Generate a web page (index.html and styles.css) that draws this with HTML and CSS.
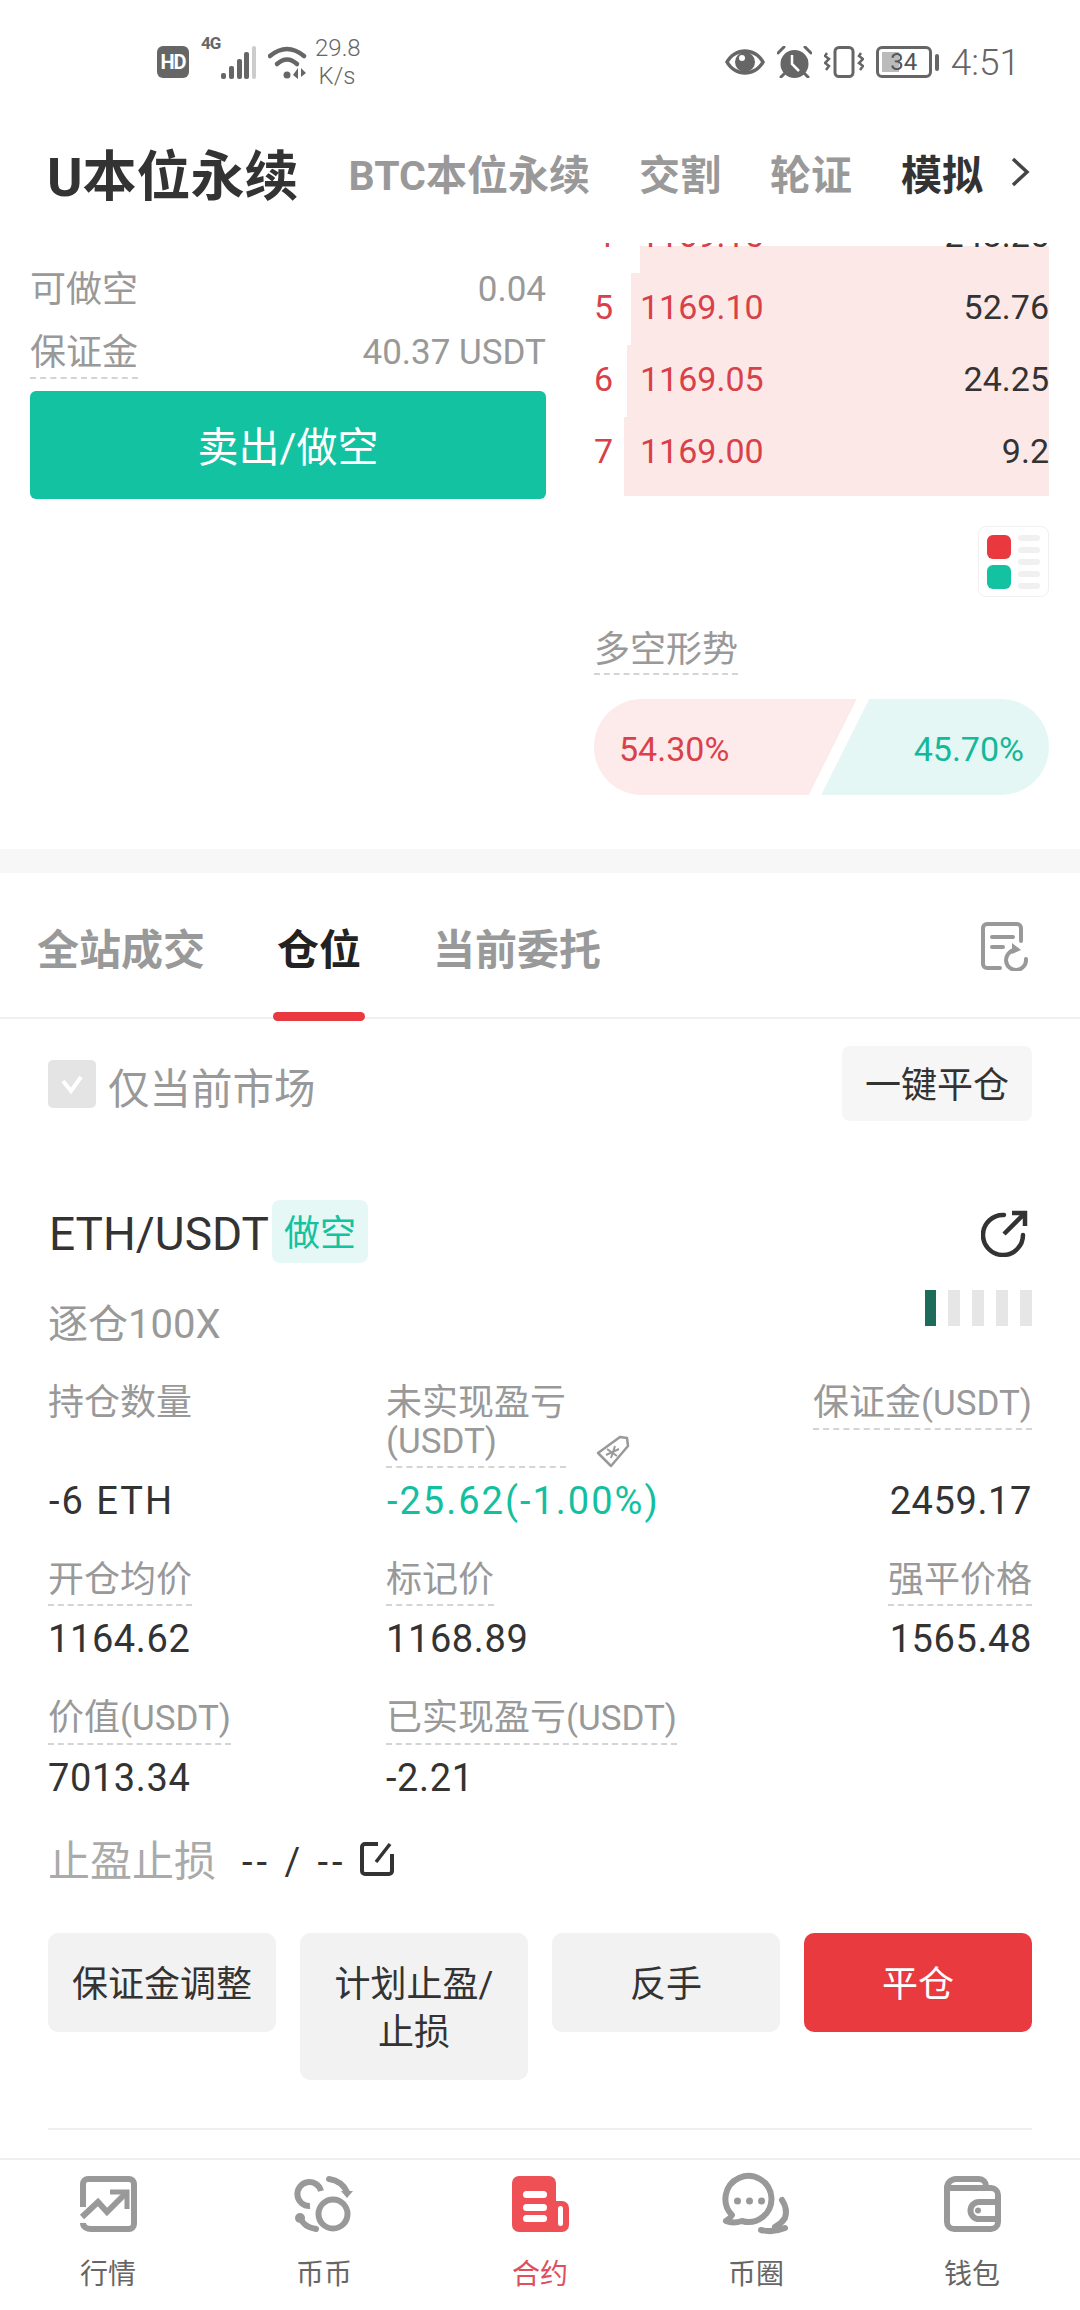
FILE: index.html
```html
<!DOCTYPE html>
<html lang="zh-CN">
<head>
  <meta charset="UTF-8" />
  <title>U本位永续</title>
  <link rel="stylesheet" href="styles.css">
</head>
<body>
  <div class="status">
    <div class="status-left">
      <div class="hd">HD</div>
      <div class="net">4G</div>
      <svg class="signal" width="36" height="33" viewBox="0 0 36 33">
        <rect x="0" y="27" width="5" height="6" rx="2" fill="#666"/>
        <rect x="8" y="20" width="5" height="13" rx="2" fill="#666"/>
        <rect x="16" y="13" width="5" height="20" rx="2" fill="#666"/>
        <rect x="23" y="6" width="5" height="27" rx="2" fill="#666"/>
        <rect x="31" y="0" width="4" height="33" rx="2" fill="#ccc"/>
      </svg>
      <svg class="wifi" width="39" height="33" viewBox="0 0 39 33">
        <path d="M2 10Q19 -4 36 10" fill="none" stroke="#666" stroke-width="4.5" stroke-linecap="round"/>
        <path d="M9 18Q19 9 29 18" fill="none" stroke="#666" stroke-width="4.5" stroke-linecap="round"/>
        <circle cx="19" cy="29" r="3.5" fill="#666"/>
        <path d="M30 22V33L25 29ZM33 22L38 27L33 31Z" fill="#666"/>
      </svg>
      <div class="speed">29.8<br>K/s</div>
    </div>
    <div class="status-right">
      <svg width="40" height="26" viewBox="0 0 40 26">
        <path d="M0 13C9 -4 31 -4 40 13C31 30 9 30 0 13Z" fill="#666"/>
        <path d="M4 13C11 1 29 1 36 13C29 25 11 25 4 13Z" fill="#fff"/>
        <circle cx="20" cy="13" r="10" fill="#666"/>
        <circle cx="17" cy="9" r="3" fill="#fff"/>
      </svg>
      <svg width="35" height="32" viewBox="0 0 35 32">
        <circle cx="17.5" cy="18" r="14" fill="#666"/>
        <path d="M15 9V18L22 25" fill="none" stroke="#fff" stroke-width="2.5"/>
        <path d="M1 7L7 1M28 1L34 7M7 28L4 31M28 28L31 31" stroke="#666" stroke-width="3" stroke-linecap="round"/>
      </svg>
      <svg width="40" height="32" viewBox="0 0 40 32">
        <rect x="11" y="1.5" width="18" height="29" rx="4" fill="none" stroke="#666" stroke-width="3"/>
        <path d="M3 7L1 10L5 13L1 17L5 20L2 24M37 7L35 10L39 13L35 17L39 20L36 24" fill="none" stroke="#666" stroke-width="2.5"/>
      </svg>
      <div class="battery">34</div>
      <div class="battery-nub"></div>
      <div class="clock">4:51</div>
    </div>
  </div>

  <div class="markets">
    <div class="market-main">U本位永续</div>
    <div class="market-tab">BTC本位永续</div>
    <div class="market-tab">交割</div>
    <div class="market-tab">轮证</div>
    <div class="market-tab on">模拟</div>
    <svg class="chevron" width="21" height="30" viewBox="0 0 21 30">
      <path d="M4 2L18 15L4 28" fill="none" stroke="#444" stroke-width="3.5"/>
    </svg>
  </div>

  <div class="trade">
    <div class="trade-left">
      <div class="info-row first">
        <span>可做空</span>
        <span class="num">0.04</span>
      </div>
      <div class="info-row">
        <span class="dash">保证金</span>
        <span class="num">40.37 USDT</span>
      </div>
      <div class="sell-btn">卖出/做空</div>
    </div>

    <div class="trade-right">
      <div class="book">
        <div class="book-row top">
          <div class="bar" style="width: 409px"></div>
          <span class="book-no">4</span><span class="book-price">1169.15</span><span class="book-qty">243.25</span>
        </div>
        <div class="book-row">
          <div class="bar" style="width: 418px"></div>
          <span class="book-no">5</span><span class="book-price">1169.10</span><span class="book-qty">52.76</span>
        </div>
        <div class="book-row">
          <div class="bar" style="width: 422px"></div>
          <span class="book-no">6</span><span class="book-price">1169.05</span><span class="book-qty">24.25</span>
        </div>
        <div class="book-row last">
          <div class="bar" style="width: 425px"></div>
          <span class="book-no">7</span><span class="book-price">1169.00</span><span class="book-qty">9.2</span>
        </div>
      </div>

      <div class="depth-btn">
        <div class="depth-dots"><i class="red"></i><i class="green"></i></div>
        <div class="depth-lines"><i></i><i></i><i></i><i></i><i></i></div>
      </div>

      <div class="trend-title"><span class="dash">多空形势</span></div>
      <div class="trend">
        <div class="trend-long">54.30%</div>
        <div class="trend-short">45.70%</div>
      </div>
    </div>
  </div>

  <div class="band"></div>

  <div class="tabs">
    <div class="tab">全站成交</div>
    <div class="tab on">仓位</div>
    <div class="tab">当前委托</div>
    <svg class="tabs-icon" width="48" height="50" viewBox="0 0 48 50">
      <path d="M41 20V7a4 4 0 0 0-4-4H7a4 4 0 0 0-4 4V43a4 4 0 0 0 4 4H20" fill="none" stroke="#999" stroke-width="4" stroke-linecap="round"/>
      <path d="M12 16H33M12 26H23" stroke="#999" stroke-width="4" stroke-linecap="round"/>
      <path d="M35 29A10 10 0 1 0 46 38" fill="none" stroke="#999" stroke-width="4" stroke-linecap="round"/>
      <path d="M32 22L41 29L32 33Z" fill="#999"/>
    </svg>
  </div>

  <div class="filter">
    <div class="check">
      <svg width="26" height="22" viewBox="0 0 26 22"><path d="M4 8L12 18L22 4" fill="none" stroke="#fff" stroke-width="4"/></svg>
    </div>
    <div class="filter-label">仅当前市场</div>
    <div class="close-all">一键平仓</div>
  </div>

  <div class="pos-head">
    <div class="pos-name">ETH/USDT</div>
    <div class="pos-tag">做空</div>
    <svg class="share" width="47" height="47" viewBox="0 0 47 47">
      <path d="M23 5A20 20 0 1 0 42 25" fill="none" stroke="#333" stroke-width="4.5" stroke-linecap="round"/>
      <path d="M23 24L43 4M31 3H44V16" fill="none" stroke="#333" stroke-width="4.5"/>
    </svg>
  </div>

  <div class="pos-sub">
    <div class="pos-lever">逐仓100X</div>
    <div class="risk">
      <i class="on"></i><i></i><i></i><i></i><i></i>
    </div>
  </div>

  <div class="stats">
    <div class="stat">
      <div class="stat-label">持仓数量</div>
      <div class="stat-val wide">-6 ETH</div>
    </div>
    <div class="stat">
      <div class="stat-label-wrap">
        <div class="stat-label dash">未实现盈亏<br><span class="unit">(USDT)</span></div>
        <svg class="tag-icon" width="34" height="33" viewBox="0 0 34 33">
          <path d="M2 18L24 2L31 3L32 11L15 31Z" fill="none" stroke="#999" stroke-width="2.5" stroke-linejoin="round"/>
          <path d="M11 14L21 21M19 11L15 23M10 20L23 14" stroke="#999" stroke-width="2"/>
        </svg>
      </div>
      <div class="stat-val green">-25.62(-1.00%)</div>
    </div>
    <div class="stat right">
      <div class="stat-label dash">保证金<span class="unit">(USDT)</span></div>
      <div class="stat-val">2459.17</div>
    </div>
    <div class="stat">
      <div class="stat-label dash">开仓均价</div>
      <div class="stat-val">1164.62</div>
    </div>
    <div class="stat">
      <div class="stat-label dash">标记价</div>
      <div class="stat-val">1168.89</div>
    </div>
    <div class="stat right">
      <div class="stat-label dash">强平价格</div>
      <div class="stat-val">1565.48</div>
    </div>
    <div class="stat">
      <div class="stat-label dash">价值<span class="unit">(USDT)</span></div>
      <div class="stat-val">7013.34</div>
    </div>
    <div class="stat">
      <div class="stat-label dash">已实现盈亏<span class="unit">(USDT)</span></div>
      <div class="stat-val">-2.21</div>
    </div>
  </div>

  <div class="stop">
    <div class="stop-label">止盈止损</div>
    <div class="stop-val">-- / --</div>
    <svg width="36" height="36" viewBox="0 0 36 36">
      <path d="M19 3H6a3 3 0 0 0-3 3V30a3 3 0 0 0 3 3H30a3 3 0 0 0 3-3V13" fill="none" stroke="#333" stroke-width="4"/>
      <path d="M17 21L31 3" stroke="#333" stroke-width="3.5"/>
    </svg>
  </div>

  <div class="actions">
    <div class="action">保证金调整</div>
    <div class="action">计划止盈/<br>止损</div>
    <div class="action">反手</div>
    <div class="action red">平仓</div>
  </div>

  <div class="divider"></div>

  <div class="nav">
    <div class="nav-item">
      <svg width="57" height="56" viewBox="0 0 57 56">
        <path d="M3 31V8a5 5 0 0 1 5-5H49a5 5 0 0 1 5 5V48a5 5 0 0 1-5 5H11c-4 0-8-2-8-6" fill="none" stroke="#999" stroke-width="6"/>
        <path d="M2 41L18 26L27 36L46 17" fill="none" stroke="#999" stroke-width="6"/>
        <path d="M30 16H47V33" fill="none" stroke="#999" stroke-width="5"/>
      </svg>
      <div class="nav-label">行情</div>
    </div>
    <div class="nav-item">
      <svg width="60" height="56" viewBox="0 0 60 56">
        <circle cx="39" cy="38" r="14.5" fill="none" stroke="#999" stroke-width="6"/>
        <path d="M27 15A12 12 0 1 0 16 30" fill="none" stroke="#999" stroke-width="6"/>
        <path d="M35 3Q48 5 53 16" fill="none" stroke="#999" stroke-width="6" stroke-linecap="round"/>
        <path d="M47 15L59 15L53 22Z" fill="#999"/>
        <path d="M7 43Q10 51 22 53" fill="none" stroke="#999" stroke-width="6" stroke-linecap="round"/>
        <circle cx="6" cy="42" r="5" fill="#999"/>
      </svg>
      <div class="nav-label">币币</div>
    </div>
    <div class="nav-item on">
      <svg width="57" height="56" viewBox="0 0 57 56">
        <path d="M7 0H37a7 7 0 0 1 7 7V25H50a7 7 0 0 1 7 7V49a7 7 0 0 1-7 7H7a7 7 0 0 1-7-7V7a7 7 0 0 1 7-7Z" fill="#ef5056"/>
        <rect x="11" y="15" width="24" height="7" rx="3.5" fill="#fff"/>
        <rect x="11" y="28" width="24" height="7" rx="3.5" fill="#fff"/>
        <rect x="11" y="39" width="24" height="7" rx="3.5" fill="#fff"/>
        <rect x="46" y="30" width="5" height="20" rx="2.5" fill="#fff"/>
      </svg>
      <div class="nav-label">合约</div>
    </div>
    <div class="nav-item">
      <svg class="chat" width="66" height="60" viewBox="0 0 66 60">
        <path d="M9 41A23 23 0 1 1 19 47Q10 50 3 47Q7 45 9 41Z" fill="none" stroke="#999" stroke-width="6" stroke-linejoin="round"/>
        <circle cx="14.500" cy="27" r="3.500" fill="#999"/>
        <circle cx="26.500" cy="27" r="3.500" fill="#999"/>
        <circle cx="38.500" cy="27" r="3.500" fill="#999"/>
        <path d="M59 26Q65 35 62 44Q58 50 52 53" fill="none" stroke="#999" stroke-width="6" stroke-linecap="round"/>
        <path d="M38 56Q50 59 62 54" fill="none" stroke="#999" stroke-width="6" stroke-linecap="round"/>
      </svg>
      <div class="nav-label">币圈</div>
    </div>
    <div class="nav-item">
      <svg width="57" height="56" viewBox="0 0 57 56">
        <path d="M42 12V10a7 7 0 0 0-7-7H12a9 9 0 0 0-9 9V46a7 7 0 0 0 7 7H47a7 7 0 0 0 7-7V19a7 7 0 0 0-7-7H3" fill="none" stroke="#999" stroke-width="6"/>
        <path d="M54 26H35a8 8 0 0 0 0 17H54" fill="none" stroke="#999" stroke-width="6"/>
        <circle cx="34" cy="34.500" r="3" fill="#999"/>
      </svg>
      <div class="nav-label">钱包</div>
    </div>
  </div>
</body>
</html>
```

FILE: styles.css
```css
html, body {
  margin: 0;
  padding: 0;
  background: #fff;
}
body {
  width: 1080px;
  height: 2310px;
  overflow: hidden;
  font-family: Roboto, "Noto Sans CJK SC", sans-serif;
  color: #333;
}
i {
  display: block;
}
.dash {
  border-bottom: 2px dashed #d4d4d4;
}

/* status bar */
.status {
  height: 120px;
  padding: 4px 60px 0 157px;
  box-sizing: border-box;
  display: flex;
  justify-content: space-between;
  align-items: center;
}
.status-left, .status-right {
  display: flex;
  align-items: center;
}
.hd {
  width: 32px;
  height: 32px;
  border-radius: 6px;
  background: #666;
  color: #fff;
  font-size: 20px;
  font-weight: 700;
  line-height: 32px;
  text-align: center;
  letter-spacing: -1px;
}
.net {
  align-self: flex-start;
  margin: 0 0 0 12px;
  padding-top: 2px;
  width: 20px;
  font-size: 17px;
  line-height: 14px;
  font-weight: 700;
  color: #666;
  letter-spacing: -1px;
}
.wifi {
  margin-left: 11px;
}
.speed {
  margin-left: 8px;
  width: 44px;
  font-size: 24px;
  line-height: 28px;
  color: #666;
  text-align: center;
  font-weight: 300;
}
.status-right svg {
  margin-right: 12px;
}
.battery {
  width: 56px;
  height: 32px;
  box-sizing: border-box;
  border: 3px solid #666;
  border-radius: 6px;
  background: linear-gradient(#bbb, #bbb) no-repeat 3px 3px / 17px 20px;
  font-size: 24px;
  line-height: 26px;
  color: #555;
  text-align: center;
}
.battery-nub {
  width: 4px;
  height: 17px;
  margin-left: 3px;
  background: #666;
  border-radius: 2px;
}
.clock {
  margin-left: 12px;
  font-size: 37px;
  color: #666;
  font-weight: 300;
}

/* market tabs */
.markets {
  height: 126px;
  padding: 0 0 22px 47px;
  box-sizing: border-box;
  display: flex;
  align-items: center;
}
.market-main {
  font-size: 54px;
  font-weight: 700;
  margin-right: 50px;
  white-space: nowrap;
  color: #333;
}
.market-tab {
  font-size: 41px;
  font-weight: 700;
  color: #999;
  margin-right: 49px;
  white-space: nowrap;
}
.market-tab.on {
  color: #333;
  margin-right: 26px;
}

/* trade area */
.trade {
  height: 603px;
  display: flex;
}
.trade-left {
  width: 516px;
  margin-left: 30px;
}
.trade-right {
  width: 455px;
  margin-left: 48px;
  margin-top: -3px;
}
.info-row {
  margin-top: 15px;
  display: flex;
  justify-content: space-between;
  align-items: flex-start;
  font-size: 36px;
  line-height: 48px;
  color: #999;
}
.info-row.first {
  margin-top: 20px;
}
.info-row .num {
  font-size: 35px;
}
.sell-btn {
  margin-top: 12px;
  height: 108px;
  border-radius: 6px;
  background: #12c2a0;
  color: #fff;
  font-size: 41px;
  line-height: 114px;
  text-align: center;
}
.book {
  height: 253px;
  overflow: hidden;
}
.book-row {
  position: relative;
  height: 72px;
  display: flex;
  align-items: flex-start;
  font-size: 34px;
  line-height: 68px;
}
.book-row.top {
  margin-top: -42px;
}
.book-row.last {
  height: 79px;
}
.bar {
  position: absolute;
  right: 0;
  top: 0;
  bottom: 0;
  background: #fde8e8;
}
.book-row.top .bar {
  top: 45px;
}
.book-no, .book-price, .book-qty {
  position: relative;
}
.book-no {
  width: 46px;
  color: #d8414a;
}
.book-price {
  color: #d8414a;
}
.book-qty {
  margin-left: auto;
  color: #333;
}
.depth-btn {
  width: 71px;
  height: 71px;
  margin: 30px 0 0 auto;
  box-sizing: border-box;
  border: 1px solid #f0f0f0;
  border-radius: 8px;
  padding: 8px;
  display: flex;
  gap: 7px;
}
.depth-dots i {
  width: 24px;
  height: 24px;
  border-radius: 6px;
  margin-bottom: 6px;
}
.depth-dots .red {
  background: #e9393f;
}
.depth-dots .green {
  background: #12c2a0;
}
.depth-lines {
  flex: 1;
}
.depth-lines i {
  height: 6px;
  border-radius: 3px;
  background: #f0f0f0;
  margin-bottom: 6px;
}
.trend-title {
  margin-top: 31px;
  font-size: 36px;
  line-height: 45px;
  color: #999;
}
.trend-title .dash {
  display: inline-block;
}
.trend {
  margin-top: 24px;
  height: 96px;
  display: flex;
  font-size: 34px;
  line-height: 100px;
}
.trend-long {
  width: 263px;
  padding-left: 25px;
  box-sizing: border-box;
  border-radius: 48px 0 0 48px;
  background: linear-gradient(to top left, transparent 50%, #fdeaea 50.5%) no-repeat right top / 48px 96px,
    linear-gradient(#fdeaea, #fdeaea) no-repeat left top / 215px 96px;
  color: #d8414a;
}
.trend-short {
  width: 228px;
  margin-left: -36px;
  padding-right: 25px;
  box-sizing: border-box;
  border-radius: 0 48px 48px 0;
  background: linear-gradient(to bottom right, transparent 50%, #e4f7f4 50.5%) no-repeat left top / 48px 96px,
    linear-gradient(#e4f7f4, #e4f7f4) no-repeat right top / 180px 96px;
  color: #14b89a;
  text-align: right;
}
.band {
  height: 24px;
  background: #f7f7f7;
}

/* list tabs */
.tabs {
  height: 144px;
  padding-left: 37px;
  display: flex;
  align-items: center;
  gap: 72px;
  border-bottom: 2px solid #f0f0f0;
}
.tab {
  position: relative;
  font-size: 42px;
  line-height: 56px;
  margin-top: 11px;
  font-weight: 700;
  color: #999;
}
.tab.on {
  color: #222;
}
.tab.on::after {
  content: "";
  position: absolute;
  left: -4px;
  right: -4px;
  bottom: -42px;
  height: 9px;
  border-radius: 5px;
  background: #e9393f;
}
.tabs-icon {
  margin-left: auto;
  margin-right: 52px;
  margin-top: 2px;
}
.filter {
  margin-top: 27px;
  padding: 0 48px;
  height: 75px;
  display: flex;
  align-items: center;
}
.check {
  width: 48px;
  height: 48px;
  border-radius: 5px;
  background: #e4e4e4;
  display: flex;
  align-items: center;
  justify-content: center;
}
.filter-label {
  margin-left: 12px;
  margin-top: 5px;
  font-size: 41.5px;
  color: #999;
}
.close-all {
  margin-left: auto;
  width: 190px;
  height: 75px;
  border-radius: 8px;
  background: #f6f6f6;
  font-size: 36px;
  line-height: 80px;
  text-align: center;
  color: #333;
}

/* position card */
.pos-head {
  margin-top: 79px;
  padding: 0 48px 0 49px;
  height: 63px;
  display: flex;
  align-items: center;
}
.pos-name {
  font-size: 46px;
  line-height: 63px;
  margin-top: 6px;
  color: #333;
}
.pos-tag {
  margin-left: 3px;
  width: 96px;
  height: 63px;
  border-radius: 8px;
  background: #e6f8f5;
  color: #14c2a0;
  font-size: 36px;
  line-height: 68px;
  text-align: center;
}
.share {
  margin-left: auto;
  margin-right: 4px;
  margin-top: 4px;
}
.pos-sub {
  margin-top: 27px;
  padding: 0 48px;
  height: 66px;
  display: flex;
  justify-content: space-between;
  align-items: flex-start;
}
.pos-lever {
  font-size: 40px;
  line-height: 70px;
  color: #999;
}
.risk {
  display: flex;
  gap: 12px;
}
.risk i {
  width: 12px;
  height: 36px;
  background: #e6e6e6;
}
.risk i.on {
  width: 11px;
  background: #1d6b5a;
}
.stats {
  margin-top: 28px;
  padding: 0 48px;
  display: grid;
  grid-template-columns: 338px 1fr 1fr;
  row-gap: 37px;
}
.stat {
  display: flex;
  flex-direction: column;
  justify-content: space-between;
  align-items: flex-start;
}
.stat.right {
  align-items: flex-end;
}
.stat-label {
  font-size: 36px;
  line-height: 38px;
  padding-bottom: 5px;
  color: #999;
  white-space: nowrap;
}
.stat-label-wrap {
  display: flex;
  align-items: flex-end;
  gap: 30px;
}
.unit {
  font-size: 35px;
}
.stat-val {
  margin-top: 10px;
  font-size: 38px;
  line-height: 46px;
  letter-spacing: 0.6px;
  color: #333;
}
.stat-val.wide {
  margin-left: 1px;
  letter-spacing: 2px;
}
.stat-val.green {
  margin-left: 1px;
  letter-spacing: 2px;
  color: #14bfa0;
}
.stop {
  margin-top: 36px;
  padding-left: 48px;
  height: 50px;
  display: flex;
  align-items: center;
}
.stop-label {
  font-size: 42px;
  line-height: 50px;
  color: #aaa;
}
.stop-val {
  margin-left: 26px;
  width: 117px;
  font-size: 38px;
  letter-spacing: 4px;
  white-space: nowrap;
  color: #333;
}
.stop svg {
  margin-top: -7px;
}
.actions {
  margin-top: 46px;
  padding: 0 48px;
  display: grid;
  grid-template-columns: repeat(4, 228px);
  gap: 24px;
  align-items: start;
}
.action {
  padding: 28px 0 23px;
  border-radius: 10px;
  background: #f2f2f2;
  font-size: 36px;
  line-height: 48px;
  text-align: center;
  color: #333;
}
.action.red {
  background: #e93a40;
  color: #fff;
}
.divider {
  margin: 48px 48px 0;
  height: 2px;
  background: #f0f0f0;
}

/* bottom nav */
.nav {
  margin-top: 28px;
  border-top: 2px solid #f0f0f0;
  padding-top: 16px;
  display: grid;
  grid-template-columns: repeat(5, 1fr);
}
.nav-item {
  display: flex;
  flex-direction: column;
  align-items: center;
}
.nav-item svg {
  height: 56px;
  display: block;
  overflow: visible;
}
.nav-item .chat {
  height: 60px;
  margin: -2px 0;
}
.nav-label {
  margin-top: 25px;
  font-size: 28px;
  line-height: 36px;
  color: #666;
}
.nav-item.on .nav-label {
  color: #e0505a;
}
```
